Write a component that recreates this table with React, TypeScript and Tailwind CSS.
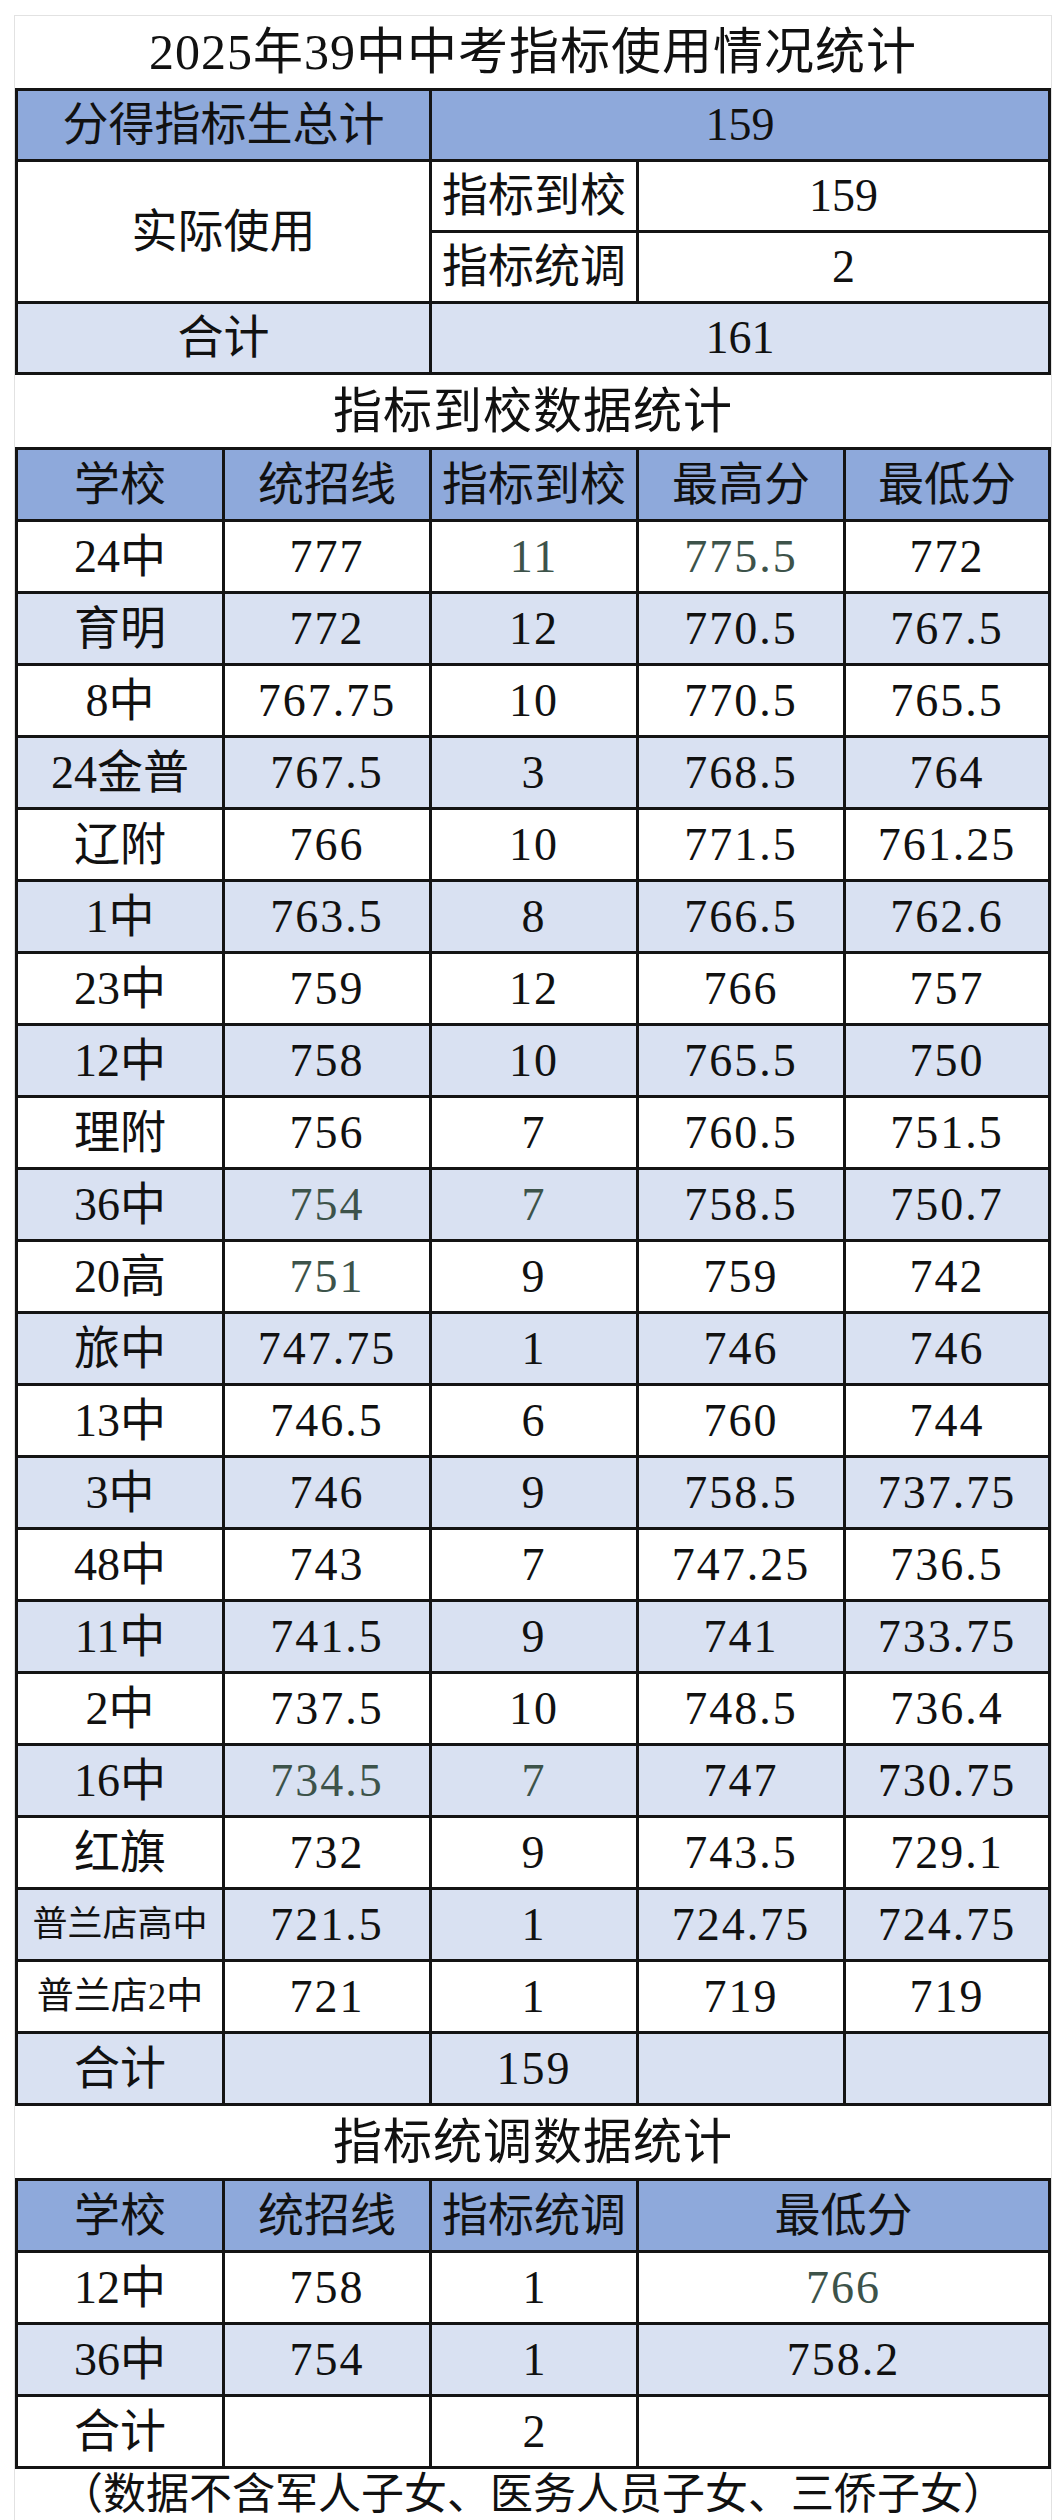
import React from "react";

const FONT = "font-['Liberation_Serif','Noto_Sans_CJK_SC',serif]";
const GREEN = "text-[#3d534a]";
const BLUE = "bg-[#8ea9db]";
const LIGHT = "bg-[#d9e1f2]";

type Cell = { v: string; g?: boolean };

// 学校, 统招线, 指标到校, 最高分, 最低分 ; g = greyish-green text in the source sheet
const ROWS: Cell[][] = [
  [{ v: "24中" }, { v: "777" }, { v: "11", g: true }, { v: "775.5", g: true }, { v: "772" }],
  [{ v: "育明" }, { v: "772" }, { v: "12" }, { v: "770.5" }, { v: "767.5" }],
  [{ v: "8中" }, { v: "767.75" }, { v: "10" }, { v: "770.5" }, { v: "765.5" }],
  [{ v: "24金普" }, { v: "767.5" }, { v: "3" }, { v: "768.5" }, { v: "764" }],
  [{ v: "辽附" }, { v: "766" }, { v: "10" }, { v: "771.5" }, { v: "761.25" }],
  [{ v: "1中" }, { v: "763.5" }, { v: "8" }, { v: "766.5" }, { v: "762.6" }],
  [{ v: "23中" }, { v: "759" }, { v: "12" }, { v: "766" }, { v: "757" }],
  [{ v: "12中" }, { v: "758" }, { v: "10" }, { v: "765.5" }, { v: "750" }],
  [{ v: "理附" }, { v: "756" }, { v: "7" }, { v: "760.5" }, { v: "751.5" }],
  [{ v: "36中" }, { v: "754", g: true }, { v: "7", g: true }, { v: "758.5" }, { v: "750.7" }],
  [{ v: "20高" }, { v: "751", g: true }, { v: "9" }, { v: "759" }, { v: "742" }],
  [{ v: "旅中" }, { v: "747.75" }, { v: "1" }, { v: "746" }, { v: "746" }],
  [{ v: "13中" }, { v: "746.5" }, { v: "6" }, { v: "760" }, { v: "744" }],
  [{ v: "3中" }, { v: "746" }, { v: "9" }, { v: "758.5" }, { v: "737.75" }],
  [{ v: "48中" }, { v: "743" }, { v: "7" }, { v: "747.25" }, { v: "736.5" }],
  [{ v: "11中" }, { v: "741.5" }, { v: "9" }, { v: "741" }, { v: "733.75" }],
  [{ v: "2中" }, { v: "737.5" }, { v: "10" }, { v: "748.5" }, { v: "736.4" }],
  [{ v: "16中" }, { v: "734.5", g: true }, { v: "7", g: true }, { v: "747" }, { v: "730.75" }],
  [{ v: "红旗" }, { v: "732" }, { v: "9" }, { v: "743.5" }, { v: "729.1" }],
  [{ v: "普兰店高中" }, { v: "721.5" }, { v: "1" }, { v: "724.75" }, { v: "724.75" }],
  [{ v: "普兰店2中" }, { v: "721" }, { v: "1" }, { v: "719" }, { v: "719" }],
  [{ v: "合计" }, { v: "" }, { v: "159" }, { v: "" }, { v: "" }],
];

// every cell draws its own right and bottom rule; the grid draws the left and top ones
const cell = "border-r-[3px] border-b-[3px] border-[#141414] flex items-center justify-center leading-none";
const grid = "border-l-[3px] border-t-[3px] border-[#141414] grid";

function nameSize(name: string) {
  if (name === "普兰店高中") return "text-[35px]";
  if (name === "普兰店2中") return "text-[37px]";
  return "text-[46px]";
}

function Title({ children, size = "text-[49px]" }: { children: React.ReactNode; size?: string }) {
  return (
    <div className={`h-[72px] flex items-center justify-center ${size} leading-none tracking-[1px]`}>
      {children}
    </div>
  );
}

export default function App() {
  return (
    <div className={`bg-white w-[1062px] h-[2520px] overflow-hidden pt-[15px] ${FONT}`}>
      <div className="ml-[14px] w-[1038px] border-x border-t border-[#e2e2e2] text-[#111]">
        <Title size="text-[50px]">2025年39中中考指标使用情况统计</Title>

        {/* 汇总 */}
        <div className={`${grid} grid-cols-[414px_207px_1fr] auto-rows-[71px] text-[46px]`}>
          <div className={`${cell} ${BLUE}`}>分得指标生总计</div>
          <div className={`${cell} ${BLUE} col-span-2`}>159</div>
          <div className={`${cell} row-span-2`}>实际使用</div>
          <div className={cell}>指标到校</div>
          <div className={cell}>159</div>
          <div className={cell}>指标统调</div>
          <div className={cell}>2</div>
          <div className={`${cell} ${LIGHT}`}>合计</div>
          <div className={`${cell} ${LIGHT} col-span-2`}>161</div>
        </div>

        <Title>指标到校数据统计</Title>

        <div className={`${grid} grid-cols-[207px_207px_207px_207px_1fr] auto-rows-[72px]`}>
          {["学校", "统招线", "指标到校", "最高分", "最低分"].map((h) => (
            <div key={h} className={`${cell} ${BLUE} text-[46px]`}>{h}</div>
          ))}
          {ROWS.map((r, i) =>
            r.map((c, j) => (
              <div
                key={`${i}-${j}`}
                className={`${cell} ${i % 2 === 1 ? LIGHT : "bg-white"} ${
                  j === 0 ? nameSize(c.v) : "text-[46px] tracking-[2px]"
                } ${c.g ? GREEN : ""}`}
              >
                {c.v}
              </div>
            ))
          )}
        </div>

        <Title>指标统调数据统计</Title>

        <div className={`${grid} grid-cols-[207px_207px_207px_1fr] auto-rows-[72px] text-[46px]`}>
          {["学校", "统招线", "指标统调", "最低分"].map((h) => (
            <div key={h} className={`${cell} ${BLUE}`}>{h}</div>
          ))}
          <div className={cell}>12中</div>
          <div className={`${cell} tracking-[2px]`}>758</div>
          <div className={cell}>1</div>
          <div className={`${cell} tracking-[2px] ${GREEN}`}>766</div>
          <div className={`${cell} ${LIGHT}`}>36中</div>
          <div className={`${cell} ${LIGHT} tracking-[2px]`}>754</div>
          <div className={`${cell} ${LIGHT}`}>1</div>
          <div className={`${cell} ${LIGHT} tracking-[2px]`}>758.2</div>
          <div className={cell}>合计</div>
          <div className={cell}></div>
          <div className={cell}>2</div>
          <div className={cell}></div>
        </div>

        <div className="h-[51px] flex items-center justify-center text-[43px] leading-none">
          （数据不含军人子女、医务人员子女、三侨子女）
        </div>
      </div>
    </div>
  );
}
